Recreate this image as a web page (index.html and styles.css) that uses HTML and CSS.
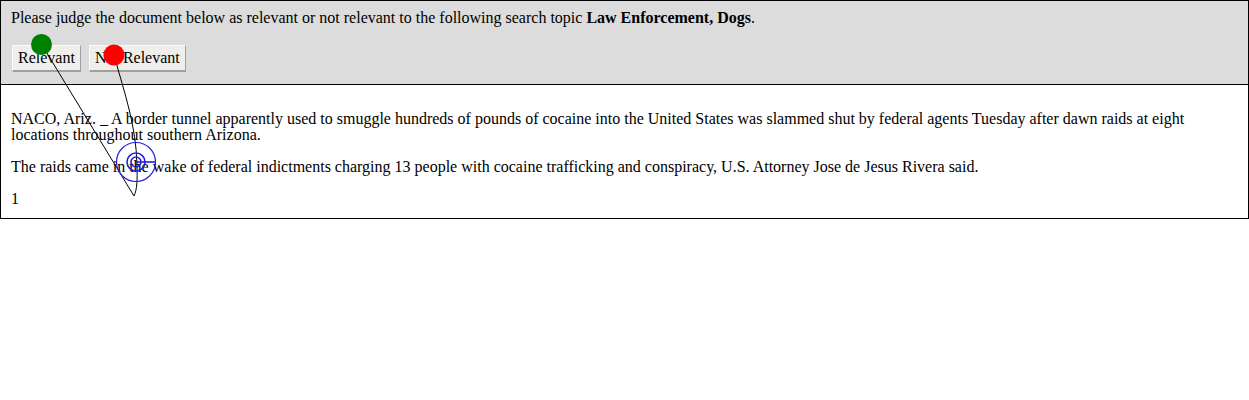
FILE: index.html
```html
<!DOCTYPE html>
<html>
<head>
<meta charset="utf-8">
<link rel="stylesheet" href="styles.css">
</head>
<body>
<div class="frame">
  <div class="judge">
    <div class="prompt">Please judge the document below as relevant or not relevant to the following search topic <b>Law Enforcement, Dogs</b>.</div>
    <div class="actions">
      <button class="btn">Relevant</button>
      <button class="btn">Not Relevant</button>
    </div>
  </div>
  <div class="doc">
    <p>NACO, Ariz. _ A border tunnel apparently used to smuggle hundreds of pounds of cocaine into the United States was slammed shut by federal agents Tuesday after dawn raids at eight locations throughout southern Arizona.</p>
    <p>The raids came in the wake of federal indictments charging 13 people with cocaine trafficking and conspiracy, U.S. Attorney Jose de Jesus Rivera said.</p>
    <p>1</p>
  </div>
</div>
<svg class="trace" width="1249" height="400" viewBox="0 0 1249 400">
  <path d="M42 45 L134 196" fill="none" stroke="#000" stroke-width="1"/>
  <path d="M114 55 C 125 95 136 125 137 165 C 137.5 180 137 190 134 196" fill="none" stroke="#000" stroke-width="1"/>
  <circle cx="136" cy="162" r="19.5" fill="none" stroke="#2222dd" stroke-width="1.2"/>
  <circle cx="136" cy="162" r="9" fill="none" stroke="#2222dd" stroke-width="1.6"/>
  <circle cx="136" cy="162" r="5" fill="none" stroke="#2222dd" stroke-width="1.6"/>
  <line x1="136" y1="162" x2="156" y2="162" stroke="#2222dd" stroke-width="1.6"/>
  <circle cx="41.5" cy="44.5" r="10.5" fill="#008000"/>
  <circle cx="114" cy="55" r="10.5" fill="#ff0000"/>
</svg>
</body>
</html>
```
FILE: styles.css
```css
html, body {
  margin: 0;
  padding: 0;
  background: #fff;
}
body {
  font-family: "Liberation Serif", "Times New Roman", serif;
  font-size: 16px;
  color: #000;
  position: relative;
}
.frame {
  width: 1247px;
  border: 1px solid #000;
}
.judge {
  background: #dcdcdc;
  border-bottom: 1px solid #000;
  padding: 8px 10px 12px 10px;
}
.prompt {
  line-height: 18px;
}
.actions {
  display: flex;
  gap: 8px;
  margin-top: 18px;
  padding-left: 1px;
}
.btn {
  font-family: "Liberation Serif", "Times New Roman", serif;
  font-size: 16px;
  color: #000;
  background: #efeeea;
  border-style: solid;
  border-width: 1px 1px 2px 1px;
  border-color: #fafafa #a0a0a0 #a0a0a0 #fafafa;
  padding: 0 5px;
  height: 27px;
  margin: 0;
  line-height: 24px;
}
.doc {
  padding: 10px 10px 11px 10px;
}
.doc p {
  margin: 16px 0;
  line-height: 16px;
}
.doc p:last-child {
  margin-bottom: 0;
}
.trace {
  position: absolute;
  left: 0;
  top: 0;
  pointer-events: none;
}
```
